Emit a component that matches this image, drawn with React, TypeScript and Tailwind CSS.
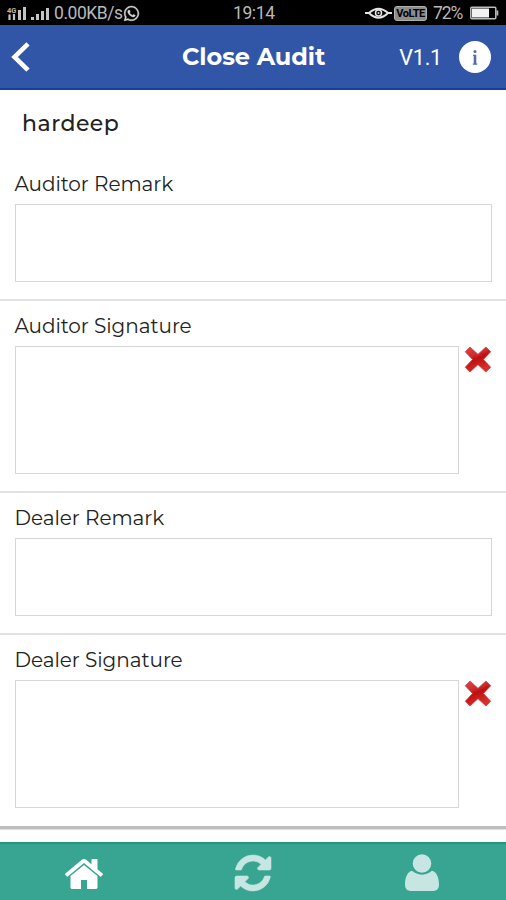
import { FaWhatsapp } from 'react-icons/fa';

interface FieldProps {
  label: string;
  signature?: boolean;
}

const Signal = ({ bars }: { bars: number[] }) => (
  <div className="flex h-[13px] items-end gap-[2px]">
    {bars.map((height, i) => (
      <span key={i} className="w-[3px] bg-[#c4c4c4]" style={{ height }} />
    ))}
  </div>
);

const StatusBar = () => (
  <div className="relative flex h-[25px] items-center justify-between bg-black pt-px pr-[7px] pl-[7px] text-[#b9b9b9]">
    <div className="flex items-center">
      <svg width="10" height="14" viewBox="0 0 10 14" className="mr-[1px]">
        <text x="0" y="7" fontSize="7.5" fontWeight="700" fill="#b9b9b9" fontFamily="Roboto">4G</text>
        <path d="M2.5 8.5V14M7 8v6" stroke="#c4c4c4" strokeWidth="2.2" />
      </svg>
      <Signal bars={[10, 13]} />
      <div className="w-[5px]" />
      <Signal bars={[3, 6, 9, 12]} />
      <span className="ml-[5px] w-[69px] font-[Roboto] text-[17.5px] leading-[25px] tracking-[-0.45px] whitespace-nowrap">0.00KB/s</span>
      <FaWhatsapp size={17} color="#d8d8d8" stroke="#d8d8d8" strokeWidth={12} />
    </div>

    <span className="absolute left-[233px] font-[Roboto] text-[17.5px] leading-[25px] tracking-[-0.4px]">19:14</span>

    <div className="flex items-center">
      <svg width="27" height="14" viewBox="0 0 27 14" fill="none" stroke="#e5e5e5">
        <path d="M0 7h4Q13.5-1.5 23 7h4M4 7q9.5 9.5 19 0" strokeWidth="2" />
        <circle cx="13.5" cy="7" r="3" strokeWidth="1.5" />
        <circle cx="13.5" cy="7" r="1" fill="#e5e5e5" stroke="none" />
      </svg>
      <span className="ml-[2px] flex h-[15px] w-[33px] items-center justify-center rounded-[3px] border-[1.5px] border-[#b0b0b0] bg-[#8c8c8c] font-[Roboto] text-[11px] leading-none font-bold tracking-[-0.5px] text-black">VoLTE</span>
      <span className="ml-[6px] w-[31px] font-[Roboto] text-[17.5px] leading-[25px] tracking-[-1.1px]">72%</span>
      <svg width="29" height="14" viewBox="0 0 29 14" className="ml-[6px]">
        <rect x="0.8" y="1.3" width="25" height="11.4" rx="1" fill="none" stroke="#bdbdbd" strokeWidth="1.5" />
        <rect x="2" y="2.5" width="17" height="9" fill="#f2f2f2" />
        <path d="M27.4 4.5v5" stroke="#bdbdbd" strokeWidth="1.8" />
      </svg>
    </div>
  </div>
);

const Header = () => (
  <div className="relative flex h-[65px] items-center justify-between border-b-2 border-[#14409a] bg-[#3156a8] pt-px pr-[15px] pl-[11px] text-white">
    <svg width="20" height="32" viewBox="0 0 20 32" fill="none">
      <path d="M17 2.8 3.5 16 17 29.2" stroke="white" strokeWidth="4.6" />
    </svg>
    <h1 className="absolute left-[182px] -mt-px text-[24px] leading-[30px] font-bold tracking-[-0.05px] whitespace-nowrap">Close Audit</h1>
    <div className="flex items-center">
      <span className="mr-[17px] pt-px font-[Roboto] text-[21.5px] leading-[30px] tracking-[-0.2px]">V1.1</span>
      <span className="flex size-8 items-center justify-center rounded-full bg-white">
        <svg width="6" height="15" viewBox="0 0 6 15" fill="#526da8">
          <circle cx="3" cy="1.6" r="1.5" />
          <path d="M1 4.8h3.3v8.7h1v1.2H.8v-1.2h.9V6H1z" />
        </svg>
      </span>
    </div>
  </div>
);

const ClearIcon = () => (
  <svg width="28" height="28" viewBox="0 0 28 28">
    <defs>
      <linearGradient id="clear" x1="0" y1="0" x2="0.4" y2="1">
        <stop offset="0" stopColor="#dc4a4a" />
        <stop offset="0.4" stopColor="#cc2a2c" />
        <stop offset="0.55" stopColor="#bd0f12" />
        <stop offset="1" stopColor="#d8302a" />
      </linearGradient>
    </defs>
    <path
      d="M6 1 14 8.3l8-7.300 4.800 4.700L19.500 13.500l7.300 7.800-4.800 4.700-8-7.300-8 7.300-4.800-4.700L8.500 13.500 1.200 5.700z"
      fill="url(#clear)"
      stroke="#d24646"
      strokeWidth="0.8"
      strokeLinejoin="round"
    />
  </svg>
);

const Field = ({ label, signature }: FieldProps) => (
  <section className="px-[14.5px]">
    <p className="h-[33.5px] pt-[2px] text-[20px] leading-6 tracking-[-0.05px] whitespace-nowrap text-[#222]">{label}</p>
    {signature ? (
      <div className="flex items-start gap-[5px]">
        <div className="h-[128px] w-[445px] border border-[#d6d6d6]" />
        <ClearIcon />
      </div>
    ) : (
      <div className="h-[78px] border border-[#d6d6d6]" />
    )}
  </section>
);

const Divider = () => <div className="mt-[17.5px] mb-[11px] h-[2px] bg-[#e2e2e2]" />;

const HomeIcon = () => (
  <svg width="42" height="42" viewBox="0 0 1792 1792" fill="white">
    <path d="M1472 992v480q0 26-19 45t-45 19h-384v-384h-256v384h-384q-26 0-45-19t-19-45v-480q0-1 .5-3t.5-3l575-474 575 474q1 2 1 6zm223-69l-62 74q-8 9-21 11h-3q-13 0-21-7l-692-577-692 577q-12 8-24 7-13-2-21-11l-62-74q-8-10-7-23.5t11-21.5l719-599q32-26 76-26t76 26l244 204v-195q0-14 9-23t23-9h192q14 0 23 9t9 23v408l219 182q10 8 11 21.5t-7 23.5z" />
  </svg>
);

const RefreshIcon = () => (
  <svg width="42" height="42" viewBox="0 0 1792 1792" fill="#c7e5e2" className="-mt-[2px]">
    <path d="M1639 1056q0 5-1 7-64 268-268 434.5t-478 166.5q-146 0-282.5-55t-243.5-157l-129 129q-19 19-45 19t-45-19-19-45v-448q0-26 19-45t45-19h448q26 0 45 19t19 45-19 45l-137 137q71 66 161 102t187 36q134 0 250-65t186-179q11-17 53-117 8-23 30-23h192q13 0 22.5 9.5t9.5 22.5zm25-800v448q0 26-19 45t-45 19h-448q-26 0-45-19t-19-45 19-45l138-138q-148-137-349-137-134 0-250 65t-186 179q-11 17-53 117-8 23-30 23h-199q-13 0-22.5-9.5t-9.5-22.5v-7q65-268 270-434.5t480-166.5q146 0 284 55.5t245 156.5l130-129q19-19 45-19t45 19 19 45z" stroke="#c7e5e2" strokeWidth="25" />
  </svg>
);

const UserIcon = () => (
  <svg width="34" height="38" viewBox="0 0 34 38" fill="#c7e5e2" className="-mt-px">
    <circle cx="17" cy="9.5" r="9.3" />
    <path d="M8 16.6Q11.500 20.400 17 20.400t9-3.800C31.500 17 34 24 34 30.500c0 4.500-2.500 6.500-6.500 6.500h-21C2.500 37 0 35 0 30.500 0 24 2.500 17 8 16.600z" />
    <path d="M6.500 15.300Q11 19.800 17 19.800t10.500-4.500" fill="none" stroke="#37a591" strokeWidth="1.500" />
  </svg>
);

const TabBar = () => (
  <nav className="mt-auto grid h-[58px] grid-cols-3 items-center justify-items-center border-t-2 border-[#249580] bg-[#37a591] pt-[3px]">
    <HomeIcon />
    <RefreshIcon />
    <UserIcon />
  </nav>
);

export default function App() {
  return (
    <div className="flex h-[900px] w-[506px] flex-col overflow-hidden bg-white font-[Montserrat,Inter,sans-serif]">
      <StatusBar />
      <Header />
      <h2 className="mt-[20px] mb-[32px] pl-[22px] text-[22px] leading-[28px] font-medium tracking-[0.5px] text-[#222]">hardeep</h2>
      <Field label="Auditor Remark" />
      <Divider />
      <Field label="Auditor Signature" signature />
      <Divider />
      <Field label="Dealer Remark" />
      <Divider />
      <Field label="Dealer Signature" signature />
      <div className="mt-[18.5px] h-[3px] bg-[#bdbdbd] shadow-[0_1px_1px_#ddd]" />
      <TabBar />
    </div>
  );
}
